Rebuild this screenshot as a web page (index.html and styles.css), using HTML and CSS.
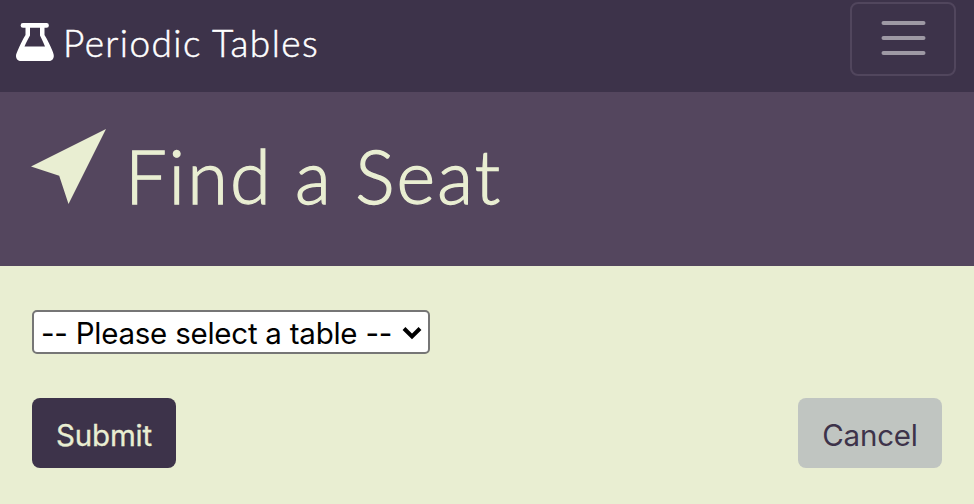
FILE: index.html
```html
<!DOCTYPE html>
<html lang="en">
<head>
<meta charset="utf-8">
<title>Periodic Tables</title>
<link rel="stylesheet" href="styles.css">
</head>
<body>
<nav class="navbar">
  <a class="brand">
    <svg class="brand-icon" viewBox="0 0 38 38" fill="currentColor" fill-rule="evenodd" aria-hidden="true"><path d="M7 0H30.500a2.400 2.400 0 0 1 0 4.800H28.500V12C31 16 34 22 36.500 28C37.300 30 37.800 31.500 37.800 33C37.800 36 35.500 38 33 38H5C2.200 38 0 36 0 33C0 31.500.600 30 1.500 28C4 22 7 16 9.500 12V4.800H7A2.400 2.400 0 0 1 7 0ZM14 4.800V12.500C12 16 10 20 8.500 23.400H29C27.500 20 25.800 16 24 12.500V4.800Z"/></svg>
    <span class="brand-name">Periodic Tables</span>
  </a>
  <button class="menu-toggle" type="button" aria-label="Menu">
    <svg class="menu-icon" viewBox="0 0 60 60" aria-hidden="true"><path d="M10.500 14H50.500M10.500 29H50.500M10.500 44H50.500"/></svg>
  </button>
</nav>
<header class="page-header">
  <svg class="arrow-icon" viewBox="0 0 75 75" fill="currentColor" aria-hidden="true"><path d="M75 0L0 37.500L28.200 46.800L37.500 75Z"/></svg>
  <h1 class="page-title">Find a Seat</h1>
</header>
<main class="content">
  <div class="select" role="combobox" aria-expanded="false" tabindex="0">
    <span class="select-label">-- Please select a table --</span>
    <svg class="chevron" viewBox="0 0 20 14" aria-hidden="true"><path d="M2 2.500L10 10.500L18 2.500"/></svg>
  </div>
  <div class="actions">
    <button class="btn btn-submit" type="button">Submit</button>
    <button class="btn btn-cancel" type="button">Cancel</button>
  </div>
</main>
</body>
</html>
```

FILE: styles.css
```css
* { box-sizing: border-box; }

body {
  margin: 0;
  height: 504px;
  background: #e9eed2;
  font-family: Inter, "Liberation Sans", sans-serif;
  overflow: hidden;
}

.navbar {
  display: flex;
  justify-content: space-between;
  align-items: flex-start;
  height: 92px;
  padding: 2px 18px 0 16px;
  background: #3d334a;
}

.brand {
  display: flex;
  gap: 9px;
  padding-top: 21px;
  color: #fff;
}

.brand-icon { width: 38px; height: 38px; }

.brand-name {
  font: 300 37px/40px Lato, sans-serif;
  letter-spacing: 1.400px;
  -webkit-text-stroke: 0.500px currentColor;
  white-space: nowrap;
}

.menu-toggle {
  display: flex;
  align-items: center;
  justify-content: center;
  width: 106px;
  height: 74px;
  padding: 0;
  border: 2px solid #51465d;
  border-radius: 8px;
  background: none;
}

.menu-icon {
  width: 60px;
  height: 60px;
  fill: none;
  stroke: #9e99a4;
  stroke-width: 4;
  stroke-linecap: round;
}

.page-header {
  display: flex;
  align-items: flex-start;
  gap: 19px;
  height: 174px;
  padding: 37px 31px 0;
  background: #54465e;
  color: #e9eed2;
}

.arrow-icon { width: 75px; height: 75px; }

.page-title {
  margin: 3px 0 0;
  font: 300 74px/88px Lato, sans-serif;
  letter-spacing: 2.100px;
  -webkit-text-stroke: 1.300px currentColor;
  white-space: nowrap;
}

.content { padding: 44px 32px 0; }

.select {
  display: flex;
  align-items: center;
  justify-content: space-between;
  width: 398px;
  height: 44px;
  padding: 2px 6px 0 7px;
  border: 2px solid #767676;
  border-radius: 5px;
  background: #fff;
  color: #000;
}

.select-label {
  font-size: 29.500px;
  line-height: 36px;
  letter-spacing: -0.240px;
  white-space: nowrap;
}

.chevron {
  width: 20px;
  height: 14px;
  fill: none;
  stroke: #000;
  stroke-width: 4;
}

.actions {
  display: flex;
  justify-content: space-between;
  margin-top: 44px;
}

.btn {
  width: 144px;
  height: 70px;
  padding: 3px 0 0;
  border: 0;
  border-radius: 8px;
  font: 400 29.500px/36px Inter, "Liberation Sans", sans-serif;
  letter-spacing: -0.200px;
}

.btn-submit {
  background: #3d334a;
  color: #e9eed2;
  -webkit-text-stroke: 0.300px currentColor;
}

.btn-cancel { background: #c0c5c1; color: #3d334a; }
```
